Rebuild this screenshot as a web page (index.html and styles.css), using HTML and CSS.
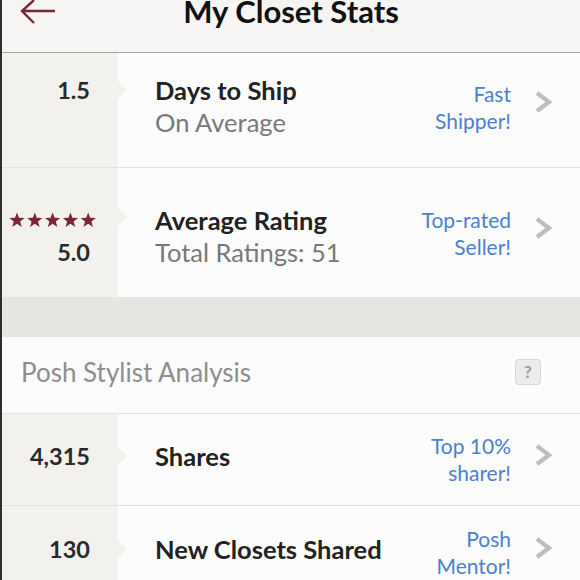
FILE: index.html
```html
<!DOCTYPE html>
<html>
<head>
    <title>My Closet Stats</title>
    <link rel="stylesheet" href="styles.css">
</head>
<body>
<div class="screen">

    <div class="topbar">
        <svg class="back" width="38" height="26" viewBox="0 0 38 26">
            <path d="M36 11 H3 M15 0 L3 11 L15 23" fill="none" stroke="#7b2535" stroke-width="2.4"/>
        </svg>
        <h1>My Closet Stats</h1>
    </div>

    <div class="row row_ship">
        <div class="num"><span class="val">1.5</span></div>
        <div class="main">
            <div class="title">Days to Ship</div>
            <div class="sub">On Average</div>
        </div>
        <div class="badge">Fast<br>Shipper!</div>
        <div class="chev"><svg width="17" height="22" viewBox="0 0 17 22"><path d="M2 2 L14 11 L2 20" fill="none" stroke="#bdbdbd" stroke-width="4.2"/></svg></div>
    </div>

    <div class="row row_rating">
        <div class="num">
            <div class="stars">
                <svg width="88" height="16" viewBox="0 0 88 16">
                    <defs>
                        <path id="star" d="M8 0.5 L10 5.8 L15.6 6 L11.2 9.5 L12.8 15 L8 11.8 L3.2 15 L4.8 9.5 L0.4 6 L6 5.8 Z" fill="#7b2535"/>
                    </defs>
                    <use href="#star" x="0"/>
                    <use href="#star" x="17.8"/>
                    <use href="#star" x="35.6"/>
                    <use href="#star" x="53.4"/>
                    <use href="#star" x="71.2"/>
                </svg>
            </div>
            <span class="val">5.0</span>
        </div>
        <div class="main">
            <div class="title">Average Rating</div>
            <div class="sub">Total Ratings: 51</div>
        </div>
        <div class="badge">Top-rated<br>Seller!</div>
        <div class="chev"><svg width="17" height="22" viewBox="0 0 17 22"><path d="M2 2 L14 11 L2 20" fill="none" stroke="#bdbdbd" stroke-width="4.2"/></svg></div>
    </div>

    <div class="band"></div>

    <div class="section_head">
        <span>Posh Stylist Analysis</span>
        <span class="help">?</span>
    </div>

    <div class="row row_shares">
        <div class="num"><span class="val">4,315</span></div>
        <div class="main">
            <div class="title">Shares</div>
        </div>
        <div class="badge">Top 10%<br>sharer!</div>
        <div class="chev"><svg width="17" height="22" viewBox="0 0 17 22"><path d="M2 2 L14 11 L2 20" fill="none" stroke="#bdbdbd" stroke-width="4.2"/></svg></div>
    </div>

    <div class="row row_closets">
        <div class="num"><span class="val">130</span></div>
        <div class="main">
            <div class="title">New Closets Shared</div>
        </div>
        <div class="badge">Posh<br>Mentor!</div>
        <div class="chev"><svg width="17" height="22" viewBox="0 0 17 22"><path d="M2 2 L14 11 L2 20" fill="none" stroke="#bdbdbd" stroke-width="4.2"/></svg></div>
    </div>

</div>
</body>
</html>
```

FILE: styles.css
```css
body {
    margin: 0;
    background: #fcfcfc;
    font-family: Lato, "Open Sans", Arial, sans-serif;
    overflow: hidden;
}

.screen {
    border-left: 2px solid #2e2e2e;
    height: 580px;
    background: #fcfcfc;
}

.topbar {
    height: 52px;
    background: #f6f5f4;
    border-bottom: 1px solid #a3a3a3;
    display: flex;
    justify-content: center;
    position: relative;
    overflow: hidden;
}

.topbar h1 {
    margin: -7px 0 0 0;
    font-size: 31px;
    font-weight: bold;
    color: #111;
    line-height: 36px;
}

.back {
    position: absolute;
    left: 17px;
    top: 0;
}

/* stat rows */

.row {
    display: flex;
    border-bottom: 1px solid #e1e1e1;
}

.num {
    width: 116px;
    flex: none;
    background: #f3f1ee;
    text-align: right;
    padding-right: 28px;
    box-sizing: border-box;
    position: relative;
    font-size: 23.5px;
    font-weight: bold;
    color: #2a2a2a;
    line-height: 32px;
}

.num::after {
    content: "";
    position: absolute;
    right: -9px;
    top: 28px;
    border-left: 9px solid #f3f1ee;
    border-top: 9px solid transparent;
    border-bottom: 9px solid transparent;
}

.stars {
    height: 32px;
    display: flex;
    align-items: center;
    justify-content: flex-end;
    margin-right: -7px;
}

.stars svg {
    display: block;
}

.main {
    flex: 1;
    padding-left: 37px;
    line-height: 32px;
    font-size: 25.5px;
}

.title {
    font-weight: bold;
    color: #222;
}

.sub {
    color: #787878;
}

.badge {
    align-self: center;
    text-align: right;
    color: #4b80d0;
    font-size: 21px;
    line-height: 27px;
}

.chev {
    align-self: center;
    width: 69px;
    flex: none;
    padding-left: 24px;
    box-sizing: border-box;
    margin-bottom: 9px;
}

.chev svg {
    display: block;
}

.row_ship {
    height: 114px;
}

.row_ship .num,
.row_ship .main {
    padding-top: 21px;
}

.row_ship .badge {
    margin-bottom: 7px;
}

.row_ship .chev {
    margin-bottom: 16px;
}

.row_rating {
    height: 129px;
    border-bottom: none;
}

.row_rating .num,
.row_rating .main {
    padding-top: 36px;
}

.row_rating .num::after {
    top: 40px;
}

.band {
    height: 40px;
    background: #e7e5e1;
}

.section_head {
    height: 77px;
    border-bottom: 1px solid #e1e1e1;
    display: flex;
    align-items: center;
    justify-content: space-between;
    padding: 0 39px 6px 19px;
    box-sizing: border-box;
    font-size: 26px;
    color: #8e8e8e;
}

.help {
    width: 26px;
    height: 26px;
    box-sizing: border-box;
    border: 1px solid #d6d6d6;
    border-radius: 4px;
    background: #ececec;
    color: #9a9a9a;
    font-size: 17px;
    font-weight: bold;
    line-height: 24px;
    text-align: center;
}

.row_shares {
    height: 91px;
}

.row_shares .num,
.row_shares .main {
    padding-top: 26px;
}

.row_shares .badge {
    margin-bottom: 2px;
}

.row_shares .num::after {
    top: 33px;
}

.row_closets {
    height: 92px;
}

.row_closets .num,
.row_closets .main {
    padding-top: 27px;
}

.row_closets .num::after {
    top: 34px;
}
```
